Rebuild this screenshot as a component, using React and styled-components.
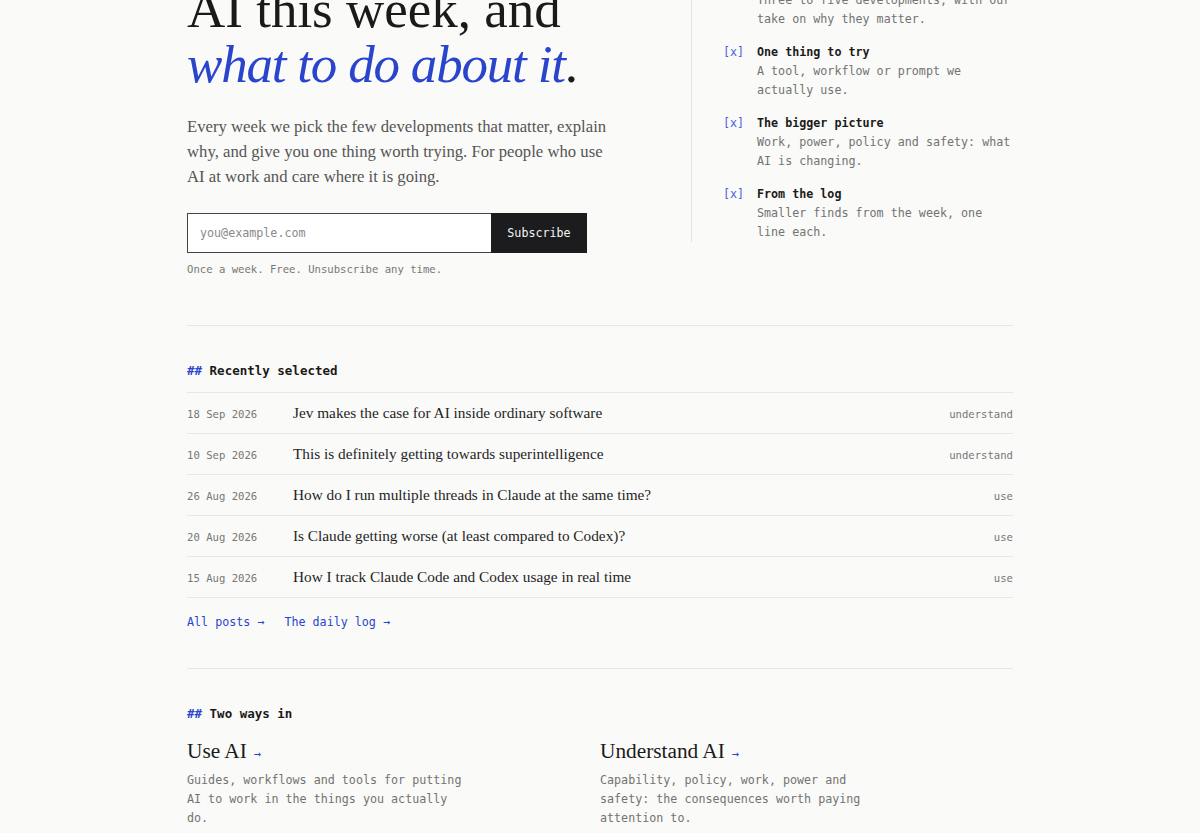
import React from "react";
import styled, { createGlobalStyle } from "styled-components";

const Global = createGlobalStyle`
  html, body { margin: 0; padding: 0; background: #fafaf9; }
  body { overflow: hidden; -webkit-font-smoothing: antialiased; }
  * { box-sizing: border-box; }
`;

const MONO = `"DejaVu Sans Mono", "Liberation Mono", monospace`;
const SERIF = `"Liberation Serif", "DejaVu Serif", serif`;
const BLUE = "#2a45cc";

const Page = styled.main`
  width: 826px;
  margin: 0 auto;
  color: #1a1a1a;
`;

const Hero = styled.section`
  display: grid;
  grid-template-columns: 1fr 322px;
  align-items: start;
  margin-top: -30px;
  padding-bottom: 48px;
  border-bottom: 1px solid #e6e6e3;
`;

const HeroMain = styled.div`
  padding-top: 12px;
`;

const Title = styled.h1`
  margin: 0;
  font-family: ${SERIF};
  font-weight: 400;
  font-size: 53px;
  line-height: 55px;
  color: #1a1a1a;
`;

const Accent = styled.em`
  color: ${BLUE};
  font-style: italic;
  letter-spacing: -1.2px;
`;

const Lede = styled.p`
  margin: 22px 0 0;
  max-width: 430px;
  font-family: ${SERIF};
  font-size: 16.7px;
  line-height: 25px;
  color: #555553;
`;

const Form = styled.form`
  display: flex;
  width: 400px;
  height: 40px;
  margin-top: 24px;
`;

const Email = styled.input`
  flex: 1;
  min-width: 0;
  height: 40px;
  padding: 0 12px;
  border: 1px solid #444;
  border-right: none;
  background: #fff;
  font-family: ${MONO};
  font-size: 11.7px;
  color: #1a1a1a;
  outline: none;
  &::placeholder { color: #8a8a88; }
`;

const Button = styled.button`
  width: 96px;
  height: 40px;
  border: none;
  background: #1c1c1e;
  color: #f4f4f2;
  font-family: ${MONO};
  font-size: 11.7px;
  cursor: pointer;
`;

const Note = styled.p`
  margin: 8px 0 0;
  font-family: ${MONO};
  font-size: 10.6px;
  line-height: 16px;
  color: #777775;
`;

const Aside = styled.aside`
  border-left: 1px solid #e3e3e0;
  padding-top: 2px;
  padding-left: 31px;
  display: flex;
  flex-direction: column;
  gap: 14px;
`;

const Item = styled.div`
  display: grid;
  grid-template-columns: 34px 1fr;
  font-family: ${MONO};
  font-size: 11.7px;
  line-height: 19px;
`;

const Mark = styled.span`
  color: #4a63d4;
`;

const ItemTitle = styled.div`
  font-weight: 700;
  color: #1a1a1a;
`;

const ItemText = styled.div`
  color: #737371;
`;

const Section = styled.section`
  padding: 36px 0 37px;
  border-bottom: ${(p) => (p.$last ? "none" : "1px solid #e6e6e3")};
`;

const Label = styled.h2`
  margin: 0;
  font-family: ${MONO};
  font-size: 12.5px;
  line-height: 18px;
  font-weight: 700;
  color: #1a1a1a;
  span { color: ${BLUE}; }
`;

const List = styled.ul`
  list-style: none;
  margin: 12px 0 0;
  padding: 0;
  border-top: 1px solid #e8e8e5;
`;

const Row = styled.li`
  display: grid;
  grid-template-columns: 106px 1fr auto;
  align-items: baseline;
  padding: 10px 0;
  border-bottom: 1px solid #e8e8e5;
`;

const Date = styled.span`
  font-family: ${MONO};
  font-size: 10.6px;
  color: #777775;
`;

const PostTitle = styled.a`
  font-family: ${SERIF};
  font-size: 15.3px;
  line-height: 20px;
  color: #1f1f1f;
  text-decoration: none;
`;

const Tag = styled.span`
  font-family: ${MONO};
  font-size: 10.6px;
  color: #777775;
`;

const Links = styled.div`
  display: flex;
  gap: 20px;
  margin-top: 15px;
`;

const MonoLink = styled.a`
  font-family: ${MONO};
  font-size: 11.7px;
  line-height: 18px;
  color: ${BLUE};
  text-decoration: none;
`;

const Ways = styled.div`
  display: grid;
  grid-template-columns: 1fr 1fr;
  margin-top: 14px;
`;

const Way = styled.div``;

const WayTitle = styled.h3`
  margin: 0;
  font-family: ${SERIF};
  font-weight: 400;
  font-size: 21.3px;
  line-height: 28px;
  color: #1a1a1a;
  span {
    font-family: ${MONO};
    font-size: 12px;
    color: ${BLUE};
    margin-left: 7px;
  }
`;

const WayText = styled.p`
  margin: 3px 0 0;
  max-width: 282px;
  font-family: ${MONO};
  font-size: 11.7px;
  line-height: 19px;
  color: #737371;
`;

const items = [
  ["Three to five developments", "Three to five developments, with our take on why they matter."],
  ["One thing to try", "A tool, workflow or prompt we actually use."],
  ["The bigger picture", "Work, power, policy and safety: what AI is changing."],
  ["From the log", "Smaller finds from the week, one line each."],
];

const posts = [
  ["18 Sep 2026", "Jev makes the case for AI inside ordinary software", "understand"],
  ["10 Sep 2026", "This is definitely getting towards superintelligence", "understand"],
  ["26 Aug 2026", "How do I run multiple threads in Claude at the same time?", "use"],
  ["20 Aug 2026", "Is Claude getting worse (at least compared to Codex)?", "use"],
  ["15 Aug 2026", "How I track Claude Code and Codex usage in real time", "use"],
];

export default function App() {
  return (
    <>
      <Global />
      <Page>
        <Hero>
          <HeroMain>
            <Title>
              AI this week, and
              <br />
              <Accent>what to do about it</Accent>.
            </Title>
            <Lede>
              Every week we pick the few developments that matter, explain why, and give you one
              thing worth trying. For people who use AI at work and care where it is going.
            </Lede>
            <Form onSubmit={(e) => e.preventDefault()}>
              <Email type="email" placeholder="you@example.com" />
              <Button type="submit">Subscribe</Button>
            </Form>
            <Note>Once a week. Free. Unsubscribe any time.</Note>
          </HeroMain>
          <Aside>
            {items.map(([t, d], i) => (
              <Item key={i}>
                <Mark>[x]</Mark>
                <div>
                  <ItemTitle>{t}</ItemTitle>
                  <ItemText>{d}</ItemText>
                </div>
              </Item>
            ))}
          </Aside>
        </Hero>

        <Section>
          <Label>
            <span>##</span> Recently selected
          </Label>
          <List>
            {posts.map(([d, t, g]) => (
              <Row key={t}>
                <Date>{d}</Date>
                <PostTitle href="#">{t}</PostTitle>
                <Tag>{g}</Tag>
              </Row>
            ))}
          </List>
          <Links>
            <MonoLink href="#">All posts →</MonoLink>
            <MonoLink href="#">The daily log →</MonoLink>
          </Links>
        </Section>

        <Section $last>
          <Label>
            <span>##</span> Two ways in
          </Label>
          <Ways>
            <Way>
              <WayTitle>
                Use AI<span>→</span>
              </WayTitle>
              <WayText>Guides, workflows and tools for putting AI to work in the things you actually do.</WayText>
            </Way>
            <Way>
              <WayTitle>
                Understand AI<span>→</span>
              </WayTitle>
              <WayText>Capability, policy, work, power and safety: the consequences worth paying attention to.</WayText>
            </Way>
          </Ways>
        </Section>
      </Page>
    </>
  );
}
